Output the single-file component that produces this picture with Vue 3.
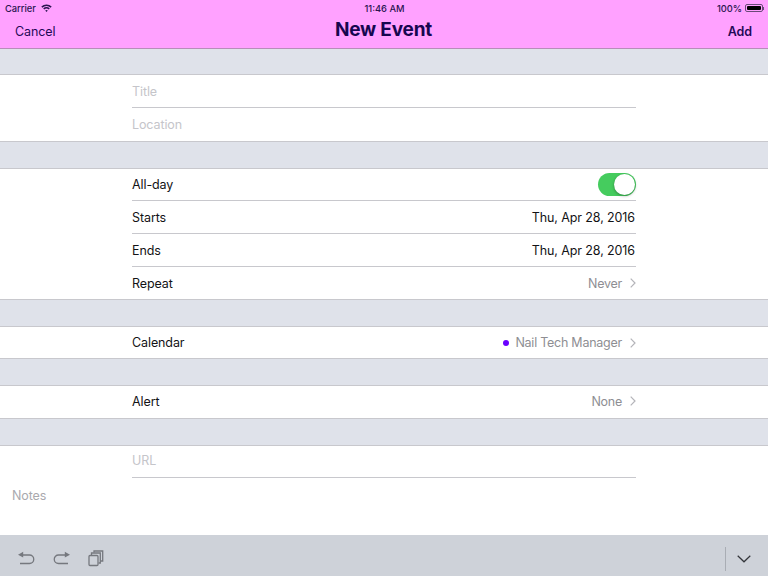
<script setup>
const dateRows = [
  { label: 'Starts', value: 'Thu, Apr 28, 2016' },
  { label: 'Ends', value: 'Thu, Apr 28, 2016' },
]
</script>

<template>
  <div class="screen">
    <header class="nav">
      <div class="status">
        <div class="status-left">
          <span>Carrier</span>
          <svg class="wifi" width="11" height="8" viewBox="0 0 11 8">
            <path d="M0.3 2.6A7.3 7.3 0 0 1 10.7 2.6L9.6 3.7A5.8 5.8 0 0 0 1.4 3.7Z" fill="#2a1450" />
            <path d="M2.2 4.5A4.6 4.6 0 0 1 8.8 4.5L7.7 5.6A3.1 3.1 0 0 0 3.3 5.6Z" fill="#2a1450" />
            <path d="M4.2 6.5A1.9 1.9 0 0 1 6.8 6.5L5.5 7.9Z" fill="#2a1450" />
          </svg>
        </div>
        <span class="clock">11:46 AM</span>
        <div class="status-right">
          <span>100%</span>
          <span class="battery"><span class="battery-fill"></span></span>
          <span class="battery-cap"></span>
        </div>
      </div>
      <div class="bar">
        <span class="cancel">Cancel</span>
        <span class="heading">New Event</span>
        <span class="add">Add</span>
      </div>
    </header>

    <main class="form">
      <div class="gap first"></div>
      <section class="group">
        <div class="row h33 line"><span class="placeholder">Title</span></div>
        <div class="row h33"><span class="placeholder">Location</span></div>
      </section>
      <div class="gap"></div>
      <section class="group">
        <div class="row h32 line">
          <span class="lift">All-day</span>
          <span class="toggle"><span class="knob"></span></span>
        </div>
        <div v-for="d in dateRows" :key="d.label" class="row h33 line">
          <span>{{ d.label }}</span>
          <span class="date">{{ d.value }}</span>
        </div>
        <div class="row h32">
          <span>Repeat</span>
          <span class="detail">Never
            <svg class="chev" width="6" height="10" viewBox="0 0 6 10"><path d="M0.7 0.7L5 5L0.7 9.3" /></svg>
          </span>
        </div>
      </section>
      <div class="gap"></div>
      <section class="group">
        <div class="row h31">
          <span>Calendar</span>
          <span class="detail"><span class="dot"></span>Nail Tech Manager
            <svg class="chev" width="6" height="10" viewBox="0 0 6 10"><path d="M0.7 0.7L5 5L0.7 9.3" /></svg>
          </span>
        </div>
      </section>
      <div class="gap"></div>
      <section class="group">
        <div class="row h32 raised">
          <span>Alert</span>
          <span class="detail">None
            <svg class="chev" width="6" height="10" viewBox="0 0 6 10"><path d="M0.7 0.7L5 5L0.7 9.3" /></svg>
          </span>
        </div>
      </section>
      <div class="gap"></div>
      <section class="group last">
        <div class="row h32 line raised"><span class="placeholder">URL</span></div>
        <div class="notes"><span class="notes-label">Notes</span></div>
      </section>
    </main>

    <footer class="toolbar">
      <div class="tools">
        <svg width="18" height="16" viewBox="0 0 18 16" fill="none" stroke="#75787e" stroke-width="1.3">
          <path d="M5 4H12.5A4 4 0 0 1 12.5 12.5H3" />
          <path d="M6.2 0.8L1 3.7L6.2 6.4Z" fill="#75787e" stroke="none" />
        </svg>
        <svg width="18" height="16" viewBox="0 0 18 16" fill="none" stroke="#75787e" stroke-width="1.3">
          <path d="M13 4H5.5A4 4 0 0 0 5.5 12.5H15" />
          <path d="M11.8 0.8L17 3.7L11.8 6.4Z" fill="#75787e" stroke="none" />
        </svg>
        <svg class="copies" width="16" height="17" viewBox="0 0 16 17" fill="none" stroke="#75787e" stroke-width="1.3">
          <rect x="1" y="5.5" width="9" height="10" rx="1" />
          <path d="M3.5 5V3H12.3V13H10.5" />
          <path d="M6 2.5V1H14.7V11H12.5" />
        </svg>
      </div>
      <div class="kbd">
        <span class="divider"></span>
        <svg width="14" height="8" viewBox="0 0 14 8" fill="none" stroke="#33353a" stroke-width="1.2"><path d="M0.7 0.7L7 6.8L13.3 0.7" /></svg>
      </div>
    </footer>
  </div>
</template>

<style>
html, body { margin: 0; padding: 0; background: #fff; }
</style>

<style scoped>
.screen {
  width: 768px;
  height: 576px;
  display: flex;
  flex-direction: column;
  overflow: hidden;
  font-family: Inter, "Liberation Sans", sans-serif;
  font-size: 12.5px;
  letter-spacing: -0.1px;
  color: #131316;
  background: #fff;
}
.nav {
  height: 49px;
  box-sizing: border-box;
  flex: none;
  background: #ffa1ff;
  border-bottom: 1px solid #b78db9;
  color: #1f0a57;
}
.status {
  height: 16px;
  padding: 0 4px 0 5px;
  display: grid;
  grid-template-columns: 1fr auto 1fr;
  align-items: center;
  font-size: 9.3px;
  letter-spacing: 0;
  font-weight: 500;
  color: #2a1450;
}
.status-left { display: flex; align-items: center; gap: 5px; }
.status-right { display: flex; align-items: center; justify-content: flex-end; gap: 3px; }
.battery {
  width: 14px;
  height: 4px;
  padding: 1px;
  border: 1px solid #6a4a78;
  border-radius: 2px;
  display: block;
}
.battery-fill { display: block; width: 100%; height: 100%; background: #000; border-radius: 1px; }
.battery-cap { width: 1px; height: 3px; margin-left: -3px; background: #6a4a78; }
.bar {
  height: 32px;
  padding: 0 16px 2px 15px;
  box-sizing: border-box;
  display: grid;
  grid-template-columns: 1fr auto 1fr;
  align-items: center;
}
.cancel { font-size: 12.5px; }
.heading { font-size: 19px; font-weight: 700; letter-spacing: -0.2px; color: #160650; margin-bottom: 4px; }
.add { font-size: 12.5px; font-weight: 600; justify-self: end; }
.form { flex: 1; display: flex; flex-direction: column; min-height: 0; }
.gap {
  flex: none;
  background: #dfe2ea;
  border-top: 1px solid #c8c8cd;
  border-bottom: 1px solid #c8c8cd;
  box-sizing: border-box;
  height: 28px;
}
.gap.first { border-top: none; height: 26px; }
.group { padding: 0 132px; background: #fff; }
.group.last { padding: 0; flex: 1; display: flex; flex-direction: column; }
.group.last .row { margin: 0 132px; }
.row {
  display: flex;
  align-items: center;
  justify-content: space-between;
  box-sizing: border-box;
  flex: none;
}
.h33 { height: 33px; }
.h32 { height: 32px; }
.h31 { height: 31px; }
.raised { padding-bottom: 2px; }
.line { border-bottom: 1px solid #c8c8cd; }
.placeholder { color: #c5c5ca; }
.lift { margin-bottom: 1px; }
.date { margin-right: 1px; }
.detail { display: flex; align-items: center; color: #8e8e93; letter-spacing: -0.25px; }
.chev { margin-left: 8px; fill: none; stroke: #b4b4b9; stroke-width: 1.2; }
.dot { width: 6px; height: 6px; border-radius: 50%; background: #6a00ff; margin-right: 6px; }
.toggle {
  width: 38px;
  height: 23px;
  border-radius: 12px;
  background: #45cc5e;
  position: relative;
  display: block;
}
.knob {
  position: absolute;
  top: 1px;
  right: 1px;
  width: 21px;
  height: 21px;
  border-radius: 50%;
  background: #fff;
  box-shadow: 0 1px 3px rgba(0, 0, 0, 0.35);
}
.notes { padding: 10px 12px 0; }
.notes-label { color: #a9a9ae; }
.toolbar {
  height: 41px;
  flex: none;
  box-sizing: border-box;
  background: #ced2d9;
  display: flex;
  align-items: center;
  justify-content: space-between;
  padding: 6px 17px 0 17px;
}
.tools { display: flex; align-items: center; gap: 18px; }
.copies { margin-left: -1px; }
.kbd { display: flex; align-items: center; gap: 11px; }
.divider { width: 1px; height: 24px; background: #a9adb4; }
</style>
